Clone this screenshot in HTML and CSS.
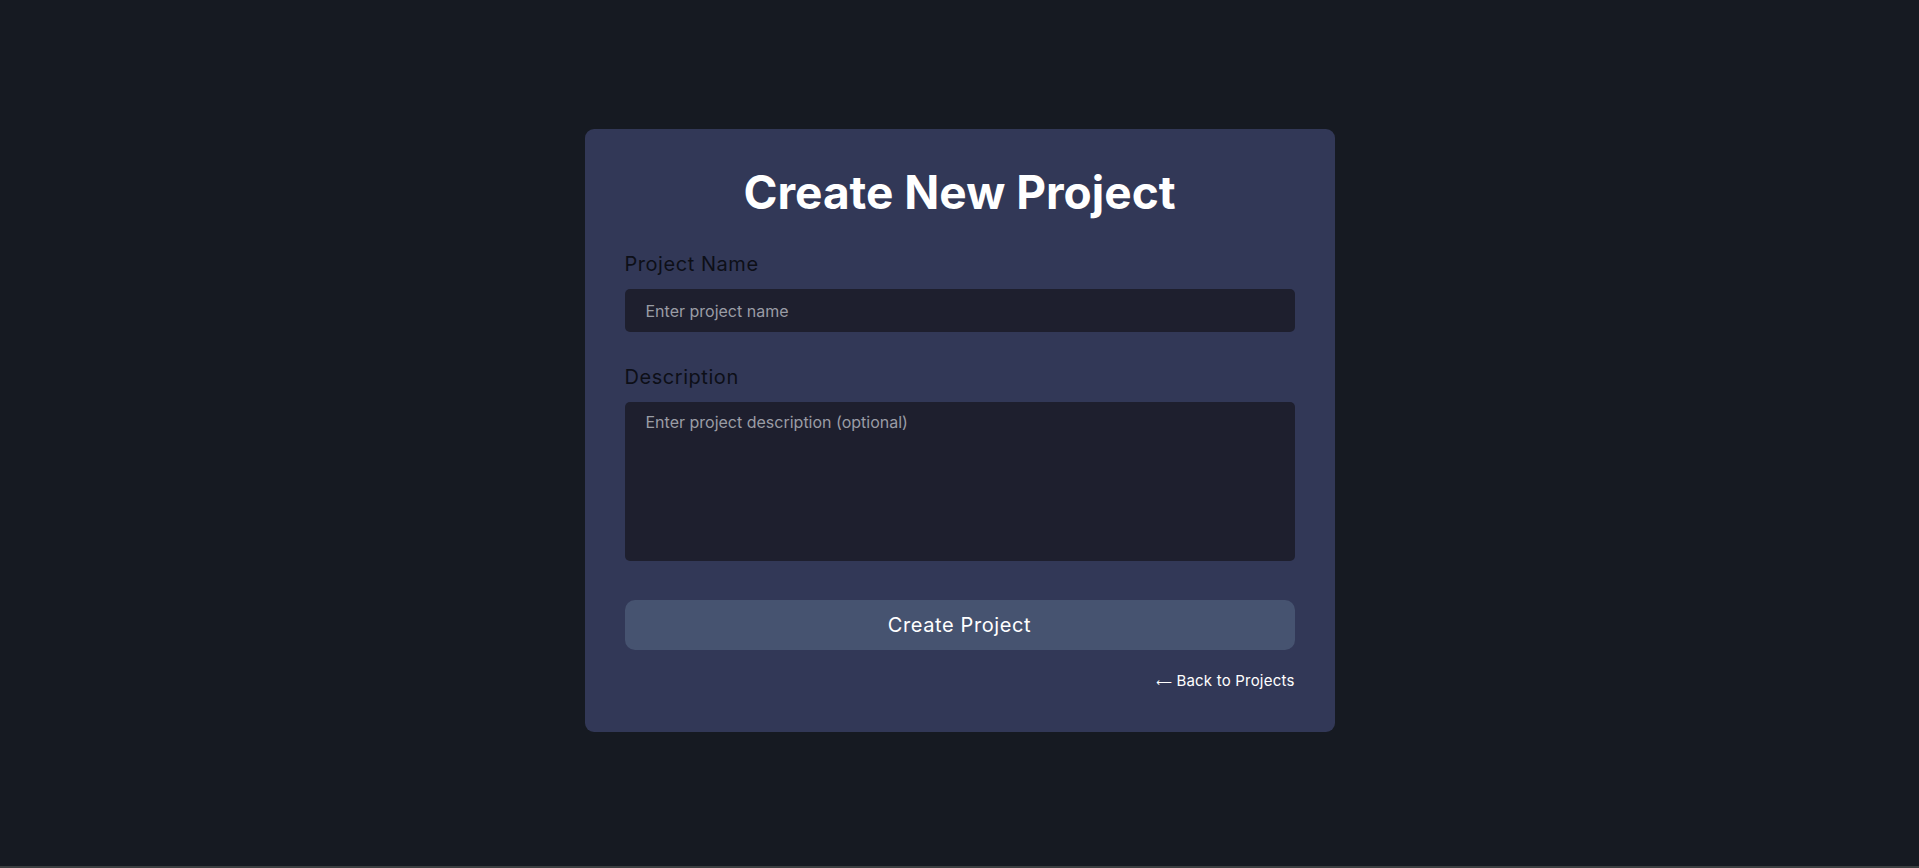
FILE: index.html
```html
<!DOCTYPE html>
<html lang="en">
<head>
<meta charset="utf-8">
<title>Create New Project</title>
<link rel="stylesheet" href="styles.css">
</head>
<body>
<main class="page">
  <form class="card">
    <h1 class="title">Create New Project</h1>
    <label class="label" for="name">Project Name</label>
    <input class="input" id="name" type="text" placeholder="Enter project name">
    <label class="label label-desc" for="desc">Description</label>
    <textarea class="textarea" id="desc" placeholder="Enter project description (optional)"></textarea>
    <button class="button" type="button">Create Project</button>
    <div class="back-row"><a class="back" href="#"><span class="arrow">&#10229;</span> Back to Projects</a></div>
  </form>
</main>
<div class="bottom-line"></div>
</body>
</html>
```

FILE: styles.css
```css
* { box-sizing: border-box; }
html, body { margin: 0; padding: 0; }
body {
  background: #161a22;
  font-family: "Inter", "Noto Sans", sans-serif;
  height: 868px;
  display: flex;
  flex-direction: column;
  overflow: hidden;
}
.page {
  flex: 1;
  display: flex;
  align-items: center;
  justify-content: center;
  padding-bottom: 5px;
}
.bottom-line {
  height: 2px;
  background: #3b3f41;
}
.card {
  width: 750px;
  height: 603px;
  background: #323857;
  border-radius: 9px;
  padding: 35px 40px 0;
  display: flex;
  flex-direction: column;
}
.title {
  margin: 0 0 32px;
  font-size: 46px;
  line-height: 56px;
  font-weight: 700;
  color: #ffffff;
  text-align: center;
}
.label {
  display: block;
  font-size: 20px;
  line-height: 24px;
  letter-spacing: 0.55px;
  color: #0d0f17;
  font-weight: 400;
  margin-bottom: 13px;
}
.label-desc { margin-top: 33px; }
.input, .textarea {
  width: 100%;
  background: #1e1f2e;
  border: none;
  border-radius: 5px;
  color: #ffffff;
  font-family: inherit;
  font-size: 16px;
  outline: none;
}
.input {
  height: 43px;
  padding: 0 21px;
}
.textarea {
  height: 159px;
  padding: 9px 21px;
  line-height: 22px;
  resize: none;
}
.input::placeholder, .textarea::placeholder { color: #9a9ca5; }
.button {
  margin-top: 39px;
  height: 50px;
  width: 100%;
  border: none;
  border-radius: 10px;
  background: #465370;
  color: #ffffff;
  font-family: inherit;
  font-size: 20px;
  letter-spacing: 0.6px;
  cursor: pointer;
}
.back-row {
  display: flex;
  justify-content: flex-end;
  margin-top: 21px;
}
.back {
  color: #ffffff;
  text-decoration: none;
  font-size: 15px;
  line-height: 20px;
  letter-spacing: 0.2px;
}
.arrow {
  font-family: "DejaVu Sans", sans-serif;
  font-size: 11px;
  letter-spacing: 0;
}
```
